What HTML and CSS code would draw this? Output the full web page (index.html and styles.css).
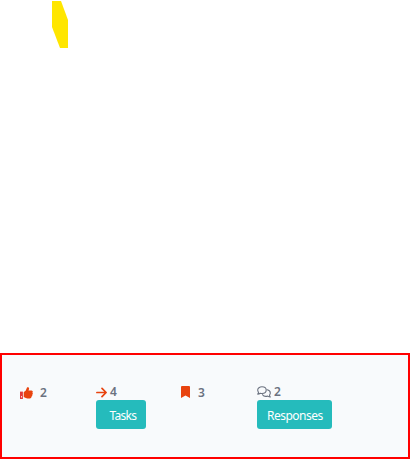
FILE: index.html
```html
<!DOCTYPE html>
<html lang="en">
<head>
<meta charset="utf-8">
<title>Activity</title>
<link rel="stylesheet" href="styles.css">
</head>
<body>
<div class="page">
  <div class="canvas">
    <svg class="marker" width="18" height="48" viewBox="0 0 18 48"><path fill="#ffe600" d="M1 1h9L17 20v28H9L1 27z"/></svg>
  </div>
  <div class="panel">
    <div class="stat like">
      <div class="count">
        <svg width="13" height="12" viewBox="0 0 13 12"><path fill="#e8430f" d="M3.700 5.200 5.800 3.600 7 .6C7.400-.2 9.200.1 9.100 1.700L8.500 3.400H11.500C12.800 3.500 13.100 4.800 12.400 5.500 13.100 6.100 12.900 7.300 12.200 7.700 12.500 8.500 12 9.400 11.400 9.600 11.500 10.700 10.900 11.400 9.800 11.400H7.500C6.300 11.400 5.300 10.900 3.700 10z"/><path fill="#e23a3a" d="M0 4.600h2.900V12H0z"/><path fill="#fbd5dc" d="M1 9h1v1.500H1z"/></svg>
        <span>2</span>
      </div>
    </div>
    <div class="stat tasks">
      <div class="count">
        <svg width="11" height="11" viewBox="0 0 11 11" fill="none" stroke="#e8430f" stroke-width="1.700" stroke-linecap="round" stroke-linejoin="round"><path d="M.9 5.500h9M6 1.300l4.100 4.200L6 9.700"/></svg>
        <span>4</span>
      </div>
      <button class="btn">Tasks</button>
    </div>
    <div class="stat saved">
      <div class="count">
        <svg width="9" height="12" viewBox="0 0 9 12"><path fill="#e8430f" d="M1 0h7Q9 0 9 1V12L4.500 9.500 0 12V1Q0 0 1 0z"/></svg>
        <span>3</span>
      </div>
    </div>
    <div class="stat replies">
      <div class="count">
        <svg width="14" height="12" viewBox="0 0 14 12" fill="none" stroke="#6b7280" stroke-width="1.100" stroke-linejoin="round" stroke-linecap="round"><path d="M5 .8C7.400.8 9.200 2.200 9.200 4.100S7.400 7.500 5 7.500C4.400 7.500 3.800 7.400 3.300 7.200 2.500 7.800 1.700 8.100.7 8.100 1.200 7.500 1.500 6.900 1.500 6.300 1 5.700.7 4.900.7 4.100.7 2.200 2.600.8 5 .8z"/><path d="M10.200 3.700C12 4 13.300 5.200 13.300 6.900 13.300 7.700 13 8.400 12.500 9 12.500 9.700 12.800 10.400 13.300 11 12.300 11 11.500 10.600 10.700 10.100 8.500 10.700 6.400 10.100 5.500 8.700"/></svg>
        <span>2</span>
      </div>
      <button class="btn">Responses</button>
    </div>
  </div>
</div>
</body>
</html>
```

FILE: styles.css
```css
* { box-sizing: border-box; }
body { margin: 0; background: #fff; font-family: "Noto Sans", "Open Sans", sans-serif; }
.page { display: flex; flex-direction: column; height: 459px; }
.canvas { height: 353px; padding-left: 51px; }
.marker { display: block; }
.panel {
  display: grid;
  grid-template-columns: 76px 85px 76px 1fr;
  align-items: start;
  height: 106px;
  padding: 29px 16px 0 18px;
  border: 2px solid #f00;
  background: #f8fafc;
}
.stat { color: #6b7280; }
.count { display: flex; align-items: center; height: 16px; gap: 3px; font-size: 12px; line-height: 16px; font-weight: 600; }
.count svg { display: block; flex: none; }
.like .count, .saved .count { height: 18px; gap: 7px; }
.saved .count { gap: 8px; }
.saved svg { margin-top: -2px; }
.btn {
  display: block;
  height: 29px;
  padding: 3px 0 0 10px;
  border: 0;
  border-radius: 3px;
  background: #25bbbc;
  color: #fff;
  font: 400 12px/20px "Noto Sans", "Open Sans", sans-serif;
  letter-spacing: -0.5px;
  text-align: left;
}
.tasks .btn { width: 50px; padding-left: 13.5px; letter-spacing: -0.7px; }
.replies .btn { width: 75px; }
```
